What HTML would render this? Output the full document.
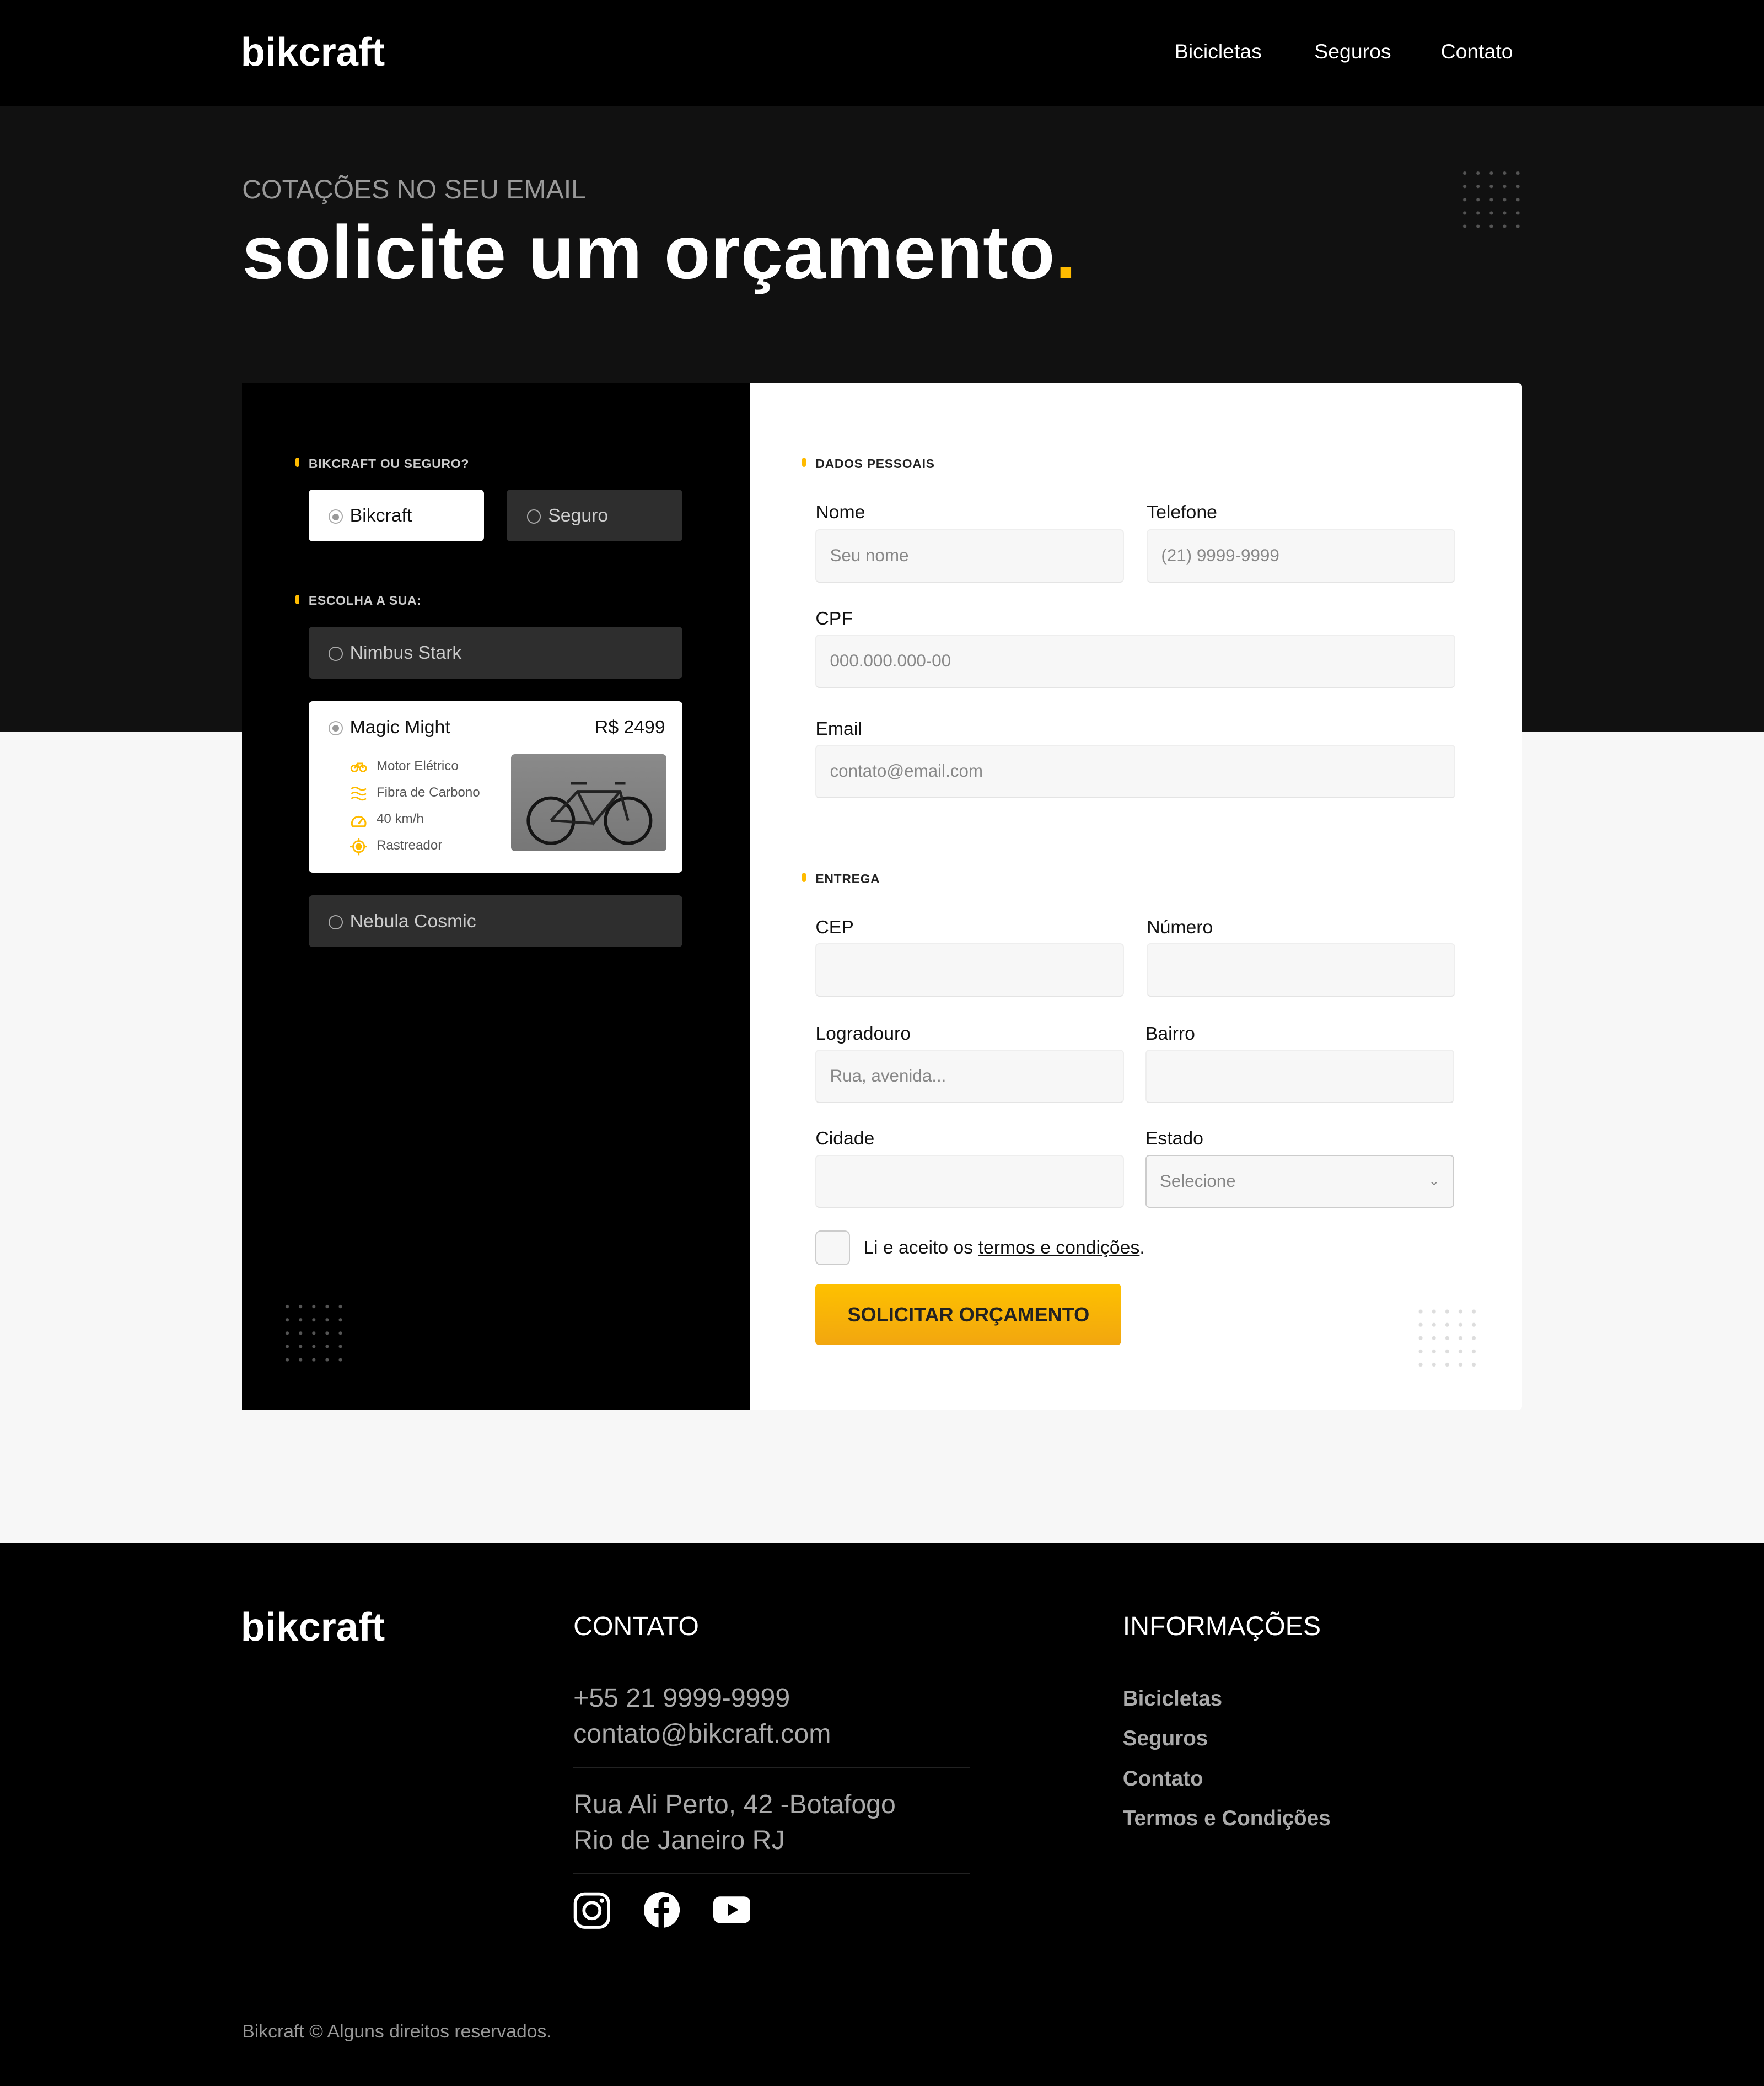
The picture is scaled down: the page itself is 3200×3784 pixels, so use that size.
<!DOCTYPE html>
<html><head><meta charset="utf-8">
<style>
html{zoom:2.41327}
*{margin:0;padding:0;box-sizing:border-box}
body{width:1326px;height:1568px;background:#f7f7f7;font-family:"Liberation Sans",sans-serif;position:relative;overflow:hidden}
.a{position:absolute}
.dots{background-image:radial-gradient(circle,#555 1.1px,transparent 1.4px);background-size:10px 10px}
.lbl{font-size:9.5px;font-weight:bold;color:#ccc;letter-spacing:.3px}
.lbl:before{content:"";position:absolute;left:-10px;top:1px;width:3px;height:7px;border-radius:2px;background:#fb0}
.opt{background:#2e2e2e;border-radius:3px;color:#ccc;font-size:14px;padding-left:31px;line-height:39px}
.opt:before{content:"";position:absolute;left:15px;top:15px;width:9px;height:9px;border:1px solid #aaa;border-radius:50%}
.sel{background:#fff;color:#111}
.sel:after{content:"";position:absolute;left:18px;top:18px;width:5px;height:5px;background:#999;border-radius:50%}
.fl{font-size:14px;color:#111}
.in{background:#f7f7f7;border:1px solid #eee;border-bottom-color:#e4e4e4;border-radius:3px;height:40px;font-size:13px;color:#888;padding-left:10px;line-height:38px}
.feat{font-size:10px;color:#555}
.fi{position:absolute;left:-20px;top:0;width:13px;height:13px}
.fl2{font-size:16px;font-weight:bold;color:#aaa}
</style></head><body>
<div class="a" style="left:0;top:0;width:1326px;height:80px;background:#000"></div>
<div class="a" style="left:181px;top:22px;color:#fff;font-size:30px;font-weight:bold;letter-spacing:0">bikcraft</div>
<div class="a" style="left:883px;top:30px;color:#fff;font-size:15.5px">Bicicletas</div>
<div class="a" style="left:988px;top:30px;color:#fff;font-size:15.5px">Seguros</div>
<div class="a" style="left:1083px;top:30px;color:#fff;font-size:15.5px">Contato</div>

<div class="a" style="left:0;top:80px;width:1326px;height:470px;background:#111"></div>
<div class="a" style="left:182px;top:131px;color:#999;font-size:20px">COTAÇÕES NO SEU EMAIL</div>
<div class="a" style="left:182px;top:157px;color:#fff;font-size:57px;font-weight:bold;letter-spacing:0.3px">solicite um orçamento<span style="color:#fb0">.</span></div>
<div class="a dots" style="left:1096px;top:125px;width:50px;height:50px"></div>

<div class="a" style="left:182px;top:288px;width:382px;height:772px;background:#000"></div>
<div class="a" style="left:564px;top:288px;width:580px;height:772px;background:#fff;border-radius:0 3px 3px 0"></div>

<div class="a lbl" style="left:232px;top:343px">BIKCRAFT OU SEGURO?</div>
<div class="a opt sel" style="left:232px;top:368px;width:132px;height:39px">Bikcraft</div>
<div class="a opt" style="left:381px;top:368px;width:132px;height:39px">Seguro</div>
<div class="a lbl" style="left:232px;top:446px">ESCOLHA A SUA:</div>
<div class="a opt" style="left:232px;top:471px;width:281px;height:39px">Nimbus Stark</div>
<div class="a opt sel" style="left:232px;top:527px;width:281px;height:129px">Magic Might<span style="position:absolute;right:13px;top:0">R$ 2499</span>
<div class="a feat" style="left:51px;top:43px;line-height:12px"><svg class="fi" viewBox="0 0 14 14" fill="none" stroke="#fb0" stroke-width="1.3"><circle cx="3.5" cy="8" r="2.5"/><circle cx="10.5" cy="8" r="2.5"/><path d="M3.5 8L6 4h4l.5 4M6 4L7 8"/></svg>Motor Elétrico</div>
<div class="a feat" style="left:51px;top:63px;line-height:12px"><svg class="fi" viewBox="0 0 14 14" fill="none" stroke="#fb0" stroke-width="1.2"><path d="M1 3q3-2 6 0t6 0M1 7q3-2 6 0t6 0M1 11q3-2 6 0t6 0"/></svg>Fibra de Carbono</div>
<div class="a feat" style="left:51px;top:83px;line-height:12px"><svg class="fi" viewBox="0 0 14 14" fill="none" stroke="#fb0" stroke-width="1.4"><path d="M2 12A5.5 5.5 0 1 1 12 12z"/><path d="M7 10l3-4"/></svg>40 km/h</div>
<div class="a feat" style="left:51px;top:103px;line-height:12px"><svg class="fi" viewBox="0 0 14 14" fill="none" stroke="#fb0" stroke-width="1.3"><circle cx="7" cy="7" r="4.5"/><circle cx="7" cy="7" r="2" fill="#fb0"/><path d="M7 0v2M7 12v2M0 7h2M12 7h2"/></svg>Rastreador</div>
<div class="a" style="left:152px;top:40px;width:117px;height:73px;border-radius:3px;background:linear-gradient(#8a8a8a,#777);overflow:hidden">
<svg width="117" height="73" viewBox="0 0 117 73"><g fill="none" stroke="#151515" stroke-width="2.5"><circle cx="30" cy="50" r="17"/><circle cx="88" cy="50" r="17"/></g><g fill="none" stroke="#222" stroke-width="2"><path d="M30 50 L50 28 L82 28 L88 50 M50 28 L62 52 L82 28 M62 52 L30 50"/><path d="M45 22h12M78 22h8"/></g></svg></div>
</div>
<div class="a opt" style="left:232px;top:673px;width:281px;height:39px">Nebula Cosmic</div>
<div class="a dots" style="left:211px;top:977px;width:50px;height:50px"></div>

<div class="a lbl" style="left:613px;top:343px;color:#222">DADOS PESSOAIS</div>
<div class="a fl" style="left:613px;top:377px">Nome</div>
<div class="a fl" style="left:862px;top:377px">Telefone</div>
<div class="a in" style="left:613px;top:398px;width:232px">Seu nome</div>
<div class="a in" style="left:862px;top:398px;width:232px">(21) 9999-9999</div>
<div class="a fl" style="left:613px;top:457px">CPF</div>
<div class="a in" style="left:613px;top:477px;width:481px">000.000.000-00</div>
<div class="a fl" style="left:613px;top:540px">Email</div>
<div class="a in" style="left:613px;top:560px;width:481px">contato@email.com</div>
<div class="a lbl" style="left:613px;top:655px;color:#222">ENTREGA</div>
<div class="a fl" style="left:613px;top:689px">CEP</div>
<div class="a fl" style="left:862px;top:689px">Número</div>
<div class="a in" style="left:613px;top:709px;width:232px"></div>
<div class="a in" style="left:862px;top:709px;width:232px"></div>
<div class="a fl" style="left:613px;top:769px">Logradouro</div>
<div class="a fl" style="left:861px;top:769px">Bairro</div>
<div class="a in" style="left:613px;top:789px;width:232px">Rua, avenida...</div>
<div class="a in" style="left:861px;top:789px;width:232px"></div>
<div class="a fl" style="left:613px;top:848px">Cidade</div>
<div class="a fl" style="left:861px;top:848px">Estado</div>
<div class="a in" style="left:613px;top:868px;width:232px"></div>
<div class="a in" style="left:861px;top:868px;width:232px;border-color:#ccc">Selecione<span style="position:absolute;right:10px;top:0;font-size:10px">&#8964;</span></div>
<div class="a" style="left:613px;top:925px;width:26px;height:26px;border:1px solid #ccc;border-radius:4px;background:#f7f7f7"></div>
<div class="a" style="left:649px;top:930px;font-size:14px;color:#111">Li e aceito os <span style="text-decoration:underline">termos e condições</span>.</div>
<div class="a" style="left:613px;top:965px;width:230px;height:46px;border-radius:3px;background:linear-gradient(#fec100,#f2a60f);font-size:15px;font-weight:bold;color:#222;text-align:center;line-height:46px">SOLICITAR ORÇAMENTO</div>
<div class="a" style="left:1063px;top:981px;width:50px;height:50px;background-image:radial-gradient(circle,#ddd 1.3px,transparent 1.6px);background-size:10px 10px"></div>

<div class="a" style="left:0;top:1160px;width:1326px;height:408px;background:#000"></div>
<div class="a" style="left:181px;top:1206px;color:#fff;font-size:30px;font-weight:bold">bikcraft</div>
<div class="a" style="left:431px;top:1211px;color:#fff;font-size:20px">CONTATO</div>
<div class="a" style="left:431px;top:1263px;color:#aaa;font-size:20px;line-height:27px">+55 21 9999-9999<br>contato@bikcraft.com</div>
<div class="a" style="left:431px;top:1328px;width:298px;height:1px;background:#222"></div>
<div class="a" style="left:431px;top:1343px;color:#aaa;font-size:20px;line-height:27px">Rua Ali Perto, 42 -Botafogo<br>Rio de Janeiro RJ</div>
<div class="a" style="left:431px;top:1408px;width:298px;height:1px;background:#222"></div>
<svg class="a" style="left:431px;top:1422px" width="28" height="28" viewBox="0 0 28 28"><rect x="1.5" y="1.5" width="25" height="25" rx="7" fill="none" stroke="#fff" stroke-width="2.4"/><circle cx="14" cy="14" r="6" fill="none" stroke="#fff" stroke-width="2.4"/><circle cx="21.5" cy="6.5" r="1.7" fill="#fff"/></svg>
<svg class="a" style="left:484px;top:1422px" width="27" height="27" viewBox="0 0 27 27"><circle cx="13.5" cy="13.5" r="13.5" fill="#fff"/><path d="M15 27V16h3.5l.5-4h-4V9.5c0-1.2.4-2 2-2h2V4.2c-.4 0-1.6-.2-3-.2-3 0-5 1.8-5 5.1V12H7.5v4H11v11z" fill="#000"/></svg>
<svg class="a" style="left:536px;top:1425px" width="28" height="21" viewBox="0 0 28 21"><rect x="0" y="0.5" width="28" height="20" rx="5" fill="#fff"/><path d="M11 6v9l8-4.5z" fill="#000"/></svg>
<div class="a" style="left:844px;top:1211px;color:#fff;font-size:20px">INFORMAÇÕES</div>
<div class="a fl2" style="left:844px;top:1268px">Bicicletas</div>
<div class="a fl2" style="left:844px;top:1298px">Seguros</div>
<div class="a fl2" style="left:844px;top:1328px">Contato</div>
<div class="a fl2" style="left:844px;top:1358px">Termos e Condições</div>
<div class="a" style="left:182px;top:1519px;color:#999;font-size:14px">Bikcraft © Alguns direitos reservados.</div>
</body></html>
